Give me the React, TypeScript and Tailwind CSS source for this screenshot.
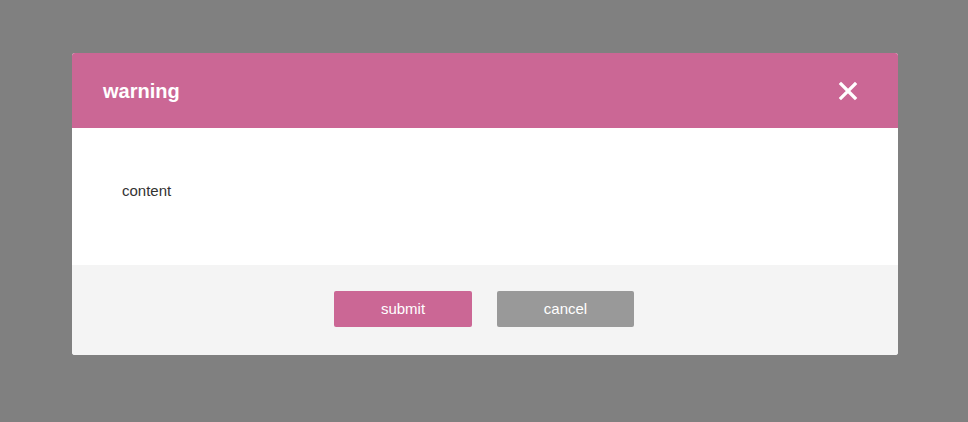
import React from "react";

function CloseIcon() {
  return (
    <svg width="20" height="20" viewBox="0 0 20 20" fill="none">
      <path d="M3 3L17 17M17 3L3 17" stroke="white" strokeWidth="3.2" strokeLinecap="square" />
    </svg>
  );
}

export default function App() {
  return (
    <div className="w-full h-[422px] bg-[#808080] pt-[53px] font-['Liberation_Sans',Arial,sans-serif]">
      <div className="w-[826px] ml-[72px] rounded-[3px] overflow-hidden bg-white">
        <div className="h-[75px] bg-[#cb6795] flex flex-row items-center justify-between pl-[31px] pr-[40px]">
          <h1 className="text-[20px] font-bold text-white">warning</h1>
          <button className="flex items-center justify-center">
            <CloseIcon />
          </button>
        </div>
        <div className="h-[137px] pl-[50px] pt-[52px]">
          <p className="text-[15px] text-[#333]">content</p>
        </div>
        <div className="h-[90px] bg-[#f4f4f4] flex flex-row justify-center items-start pt-[26px] gap-[25px] pr-[2px]">
          <button className="w-[138px] h-[36px] rounded-[2px] bg-[#cb6795] text-white text-[15px] pt-[1px]">submit</button>
          <button className="w-[137px] h-[36px] rounded-[2px] bg-[#999999] text-white text-[15px] pt-[1px]">cancel</button>
        </div>
      </div>
    </div>
  );
}
